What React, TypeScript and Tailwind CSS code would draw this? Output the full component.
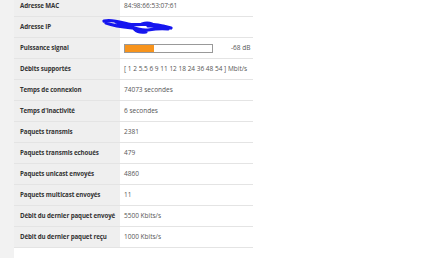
import React from 'react';

type Row = { label: string; value?: React.ReactNode };

const SignalBar = ({ level, text }: { level: number; text: string }) => (
  <div className="flex items-center">
    <div className="w-[89px] h-[9px] border border-[#999] bg-white">
      <div className="h-full bg-[#f7941d]" style={{ width: `${level}%` }} />
    </div>
    <span className="ml-[18px]">{text}</span>
  </div>
);

const rows: Row[] = [
  { label: 'Adresse MAC', value: '84:98:66:53:07:61' },
  { label: 'Adresse IP', value: '' },
  { label: 'Puissance signal', value: <SignalBar level={33} text="-68 dB" /> },
  { label: 'Débits supportés', value: '[ 1 2 5.5 6 9 11 12 18 24 36 48 54 ] Mbit/s' },
  { label: 'Temps de connexion', value: '74073 secondes' },
  { label: "Temps d'inactivité", value: '6 secondes' },
  { label: 'Paquets transmis', value: '2381' },
  { label: 'Paquets transmis echoués', value: '479' },
  { label: 'Paquets unicast envoyés', value: '4860' },
  { label: 'Paquets multicast envoyés', value: '11' },
  { label: 'Débit du dernier paquet envoyé', value: '5500 Kbits/s' },
  { label: 'Débit du dernier paquet reçu', value: '1000 Kbits/s' },
];

export default function App() {
  return (
    <div
      className="relative w-[440px] h-[258px] overflow-hidden bg-white flex"
      style={{ fontFamily: '"Open Sans", "DejaVu Sans", sans-serif' }}
    >
      <div className="w-[14px] bg-[#f2f2f2]" />
      <div className="w-[239px] -mt-[4px]">
        {rows.map((r) => (
          <div key={r.label} className="flex h-[21px] border-b border-[#e4e4e4]">
            <div className="w-[106px] bg-[#efefef] pl-[6px] flex items-center whitespace-nowrap text-[6.2px] font-bold text-[#333] tracking-[-0.1px]">
              {r.label}
            </div>
            <div className="flex-1 pl-[4px] flex items-center whitespace-nowrap text-[6.5px] text-[#555]">
              {r.value}
            </div>
          </div>
        ))}
      </div>

      {/* blue marker scribble over the IP field */}
      <svg
        className="absolute left-[102px] top-[18px]"
        width="72"
        height="18"
        viewBox="0 0 72 18"
        fill="none"
      >
        <path
          d="M2 3 C10 1 18 4 26 6 C34 8 44 5 56 7 C62 8 66 9 69 10 M4 5 C12 8 20 9 30 10 M24 7 C32 10 38 13 46 12 C52 11 58 10 66 11 M30 9 C34 12 34 15 44 14 M40 6 C46 4 50 5 54 9 M14 4 C20 6 24 8 28 7 M46 8 C52 7 58 8 62 8"
          stroke="#1616ef"
          strokeWidth="3.2"
          strokeLinecap="round"
        />
      </svg>
    </div>
  );
}
